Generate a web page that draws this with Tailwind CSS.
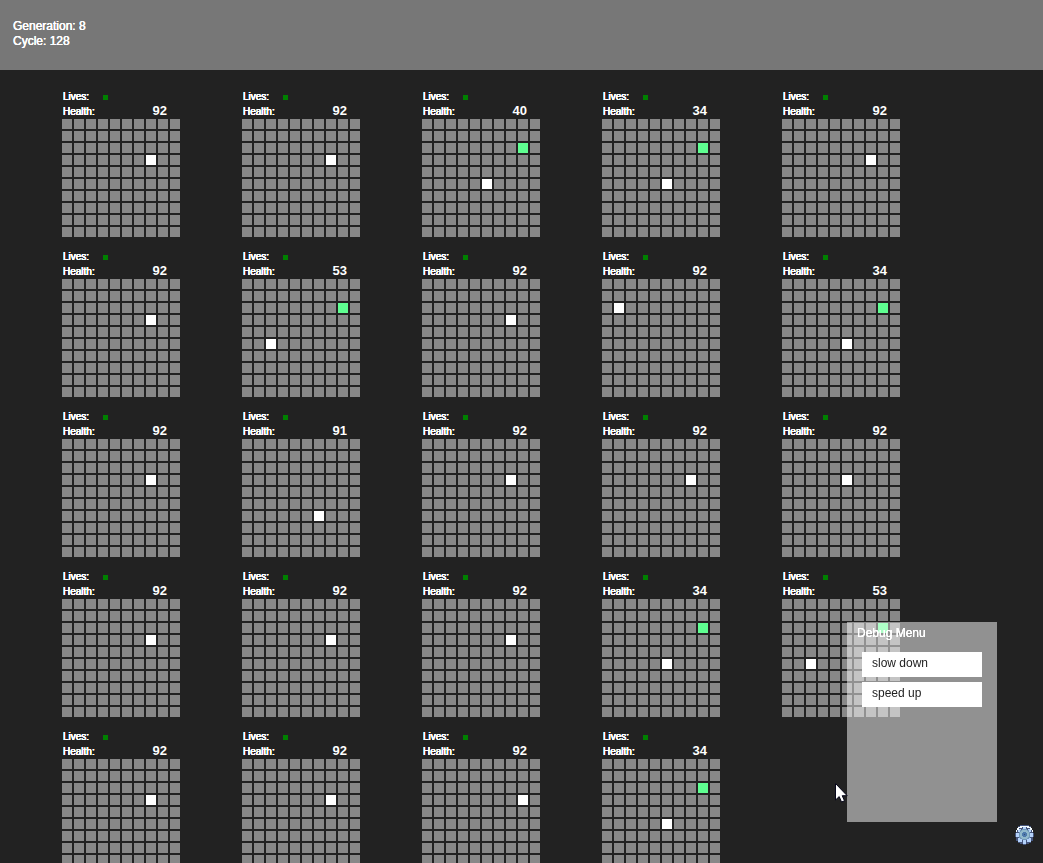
<!DOCTYPE html>
<html lang="en">
<head>
<meta charset="utf-8">
<meta name="viewport" content="width=device-width, initial-scale=1">
<title>Generations</title>
<script src="https://cdn.jsdelivr.net/npm/@tailwindcss/browser@4"></script>
</head>
<body class="h-screen overflow-hidden bg-[#222] text-white font-['Liberation_Sans',Arial,sans-serif] text-xs">
<header class="h-[70px] bg-[#777] px-[13px] pt-[19px] leading-[15px] [text-shadow:0_0_0_#fff,0_0_0_#fff]">
  <p>Generation: 8</p>
  <p>Cycle: 128</p>
</header>
<main id="worlds" class="flex flex-wrap gap-x-[62px] gap-y-[13px] pl-[62px] pt-5"></main>

<template id="world">
  <section class="w-[118px]">
    <div class="flex h-[15px] items-center text-[10px] [text-shadow:0_0_0_#fff,0_0_0_#fff,0_0_0_#fff,0_0_0_#fff]">
      <span class="w-[41px] pb-0.5 pl-px">Lives:</span><span class="size-[5px] bg-[#008000]"></span>
    </div>
    <div class="flex h-[14px] items-center justify-between pr-[13px]">
      <span class="pl-px text-[10px] [text-shadow:0_0_0_#fff,0_0_0_#fff,0_0_0_#fff,0_0_0_#fff]">Health:</span><span class="health pb-0.5 text-[13px] leading-[14px] font-bold"></span>
    </div>
    <div class="cells grid grid-cols-10 gap-0.5"></div>
  </section>
</template>

<aside class="fixed right-[46px] bottom-[41px] h-[200px] w-[150px] bg-white/50">
  <h2 class="px-2.5 pt-1 leading-[15px] [text-shadow:0_0_0_#fff,0_0_0_#fff]">Debug Menu</h2>
  <div class="flex flex-col gap-[5px] px-[15px] pt-[11px]">
    <button type="button" class="h-[25px] bg-white px-2.5 pb-[3px] text-left leading-[15px] text-[#222]">slow down</button>
    <button type="button" class="h-[25px] bg-white px-2.5 pb-[3px] text-left leading-[15px] text-[#222]">speed up</button>
  </div>
</aside>

<button type="button" aria-label="Settings" class="fixed right-[9px] bottom-[18px]">
  <svg class="block" width="19" height="20" viewBox="0 0 19 20" shape-rendering="crispEdges">
    <path fill="#46557c" d="M5 0h9v1h2v2h1v2h1v3h1v4h-1v4h-2v2h-2v1h-3v1H8v-1H5v-1H3v-2H1v-4H0V8h1V5h1V3h1V1h2z"/>
    <path fill="#b4d2fa" d="M8 2h3v3H8zM8 14h3v5H8zM1 8h4v4H1zM14 8h4v4h-4zM3 4h3v3H3zM13 4h3v3h-3zM3 13h4v4H3zM12 13h4v4h-4z"/>
    <path fill="#f4fbff" d="M5 1h9v1H5zM3 2h4v1H3zM12 2h4v1h-4zM2 3h2v2H2zM15 3h2v2h-2zM1 5h1v2H1zM17 5h1v2h-1z"/>
    <path fill="#7198b8" d="M7 4h5v1h2v2h1v6h-1v1h-2v1H7v-1H5v-1H4V7h1V5h2z"/>
    <path fill="#91b9cb" d="M7 5h5v1h1v1h1v5h-1v1h-1v1H7v-1H6v-1H5V7h1V6h1z"/>
    <path fill="#4e7aab" d="M8 7h3v1h1v3h-1v1H8v-1H7V8h1z"/>
    <path fill="#304b78" d="M9 9h1v1H9z"/>
  </svg>
</button>

<svg class="pointer-events-none fixed left-[835px] top-[783px]" width="13" height="20" viewBox="0 0 13 20" aria-hidden="true">
  <path fill="#fff" stroke="#06061a" d="M.5.5v16.5l3.7-3.4 2.3 5.4 3-1.2-2.3-5.1h5z"/>
</svg>

<script>
// Each world: [health, player column, player row, goal shown]
const worlds = [
  [92,7,3],[92,7,3],[40,5,5,1],[34,5,5,1],[92,7,3],
  [92,7,3],[53,2,5,1],[92,7,3],[92,1,2],[34,5,5,1],
  [92,7,3],[91,6,6],[92,7,3],[92,7,3],[92,5,3],
  [92,7,3],[92,7,3],[92,7,3],[34,5,5,1],[53,2,5,1],
  [92,7,3],[92,7,3],[92,8,3],[34,5,5,1]
];
const template = document.getElementById('world');
for (const [health, x, y, goal] of worlds) {
  const node = template.content.cloneNode(true);
  node.querySelector('.health').textContent = health;
  const cells = node.querySelector('.cells');
  for (let i = 0; i < 100; i++) {
    const cell = document.createElement('span');
    cell.className = i === y * 10 + x ? 'size-2.5 bg-white'
      : goal && i === 28 ? 'size-2.5 bg-[#5fff91]'
      : 'size-2.5 bg-[#888]';
    cells.append(cell);
  }
  document.getElementById('worlds').append(node);
}
</script>
</body>
</html>
